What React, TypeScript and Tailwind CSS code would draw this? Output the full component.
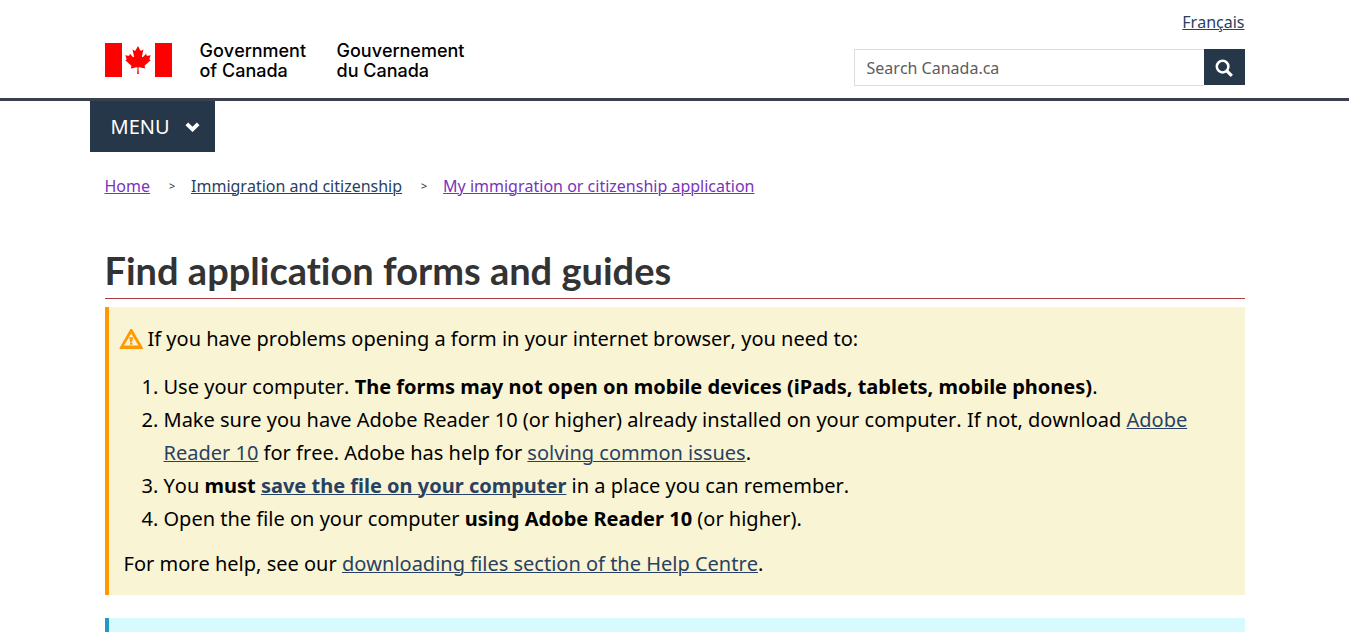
import React from "react";
import { FaCanadianMapleLeaf } from "react-icons/fa";

const linkClass = "text-[#284162] underline decoration-1";
const visitedClass = "text-[#7834bc] underline decoration-1";

function Flag() {
  return (
    <span className="flex h-[34px] w-[67px] shrink-0 items-center" aria-hidden="true">
      <span className="h-full w-[17px] bg-[#ff0000]" />
      <span className="flex flex-1 justify-center">
        <FaCanadianMapleLeaf className="h-7 w-7 text-[#ff0000]" />
      </span>
      <span className="h-full w-[17px] bg-[#ff0000]" />
    </span>
  );
}

function WarningIcon() {
  return (
    <svg viewBox="0 0 24 20" className="-ml-[5px] h-5 w-6 shrink-0" aria-hidden="true">
      <path
        fillRule="evenodd"
        fill="#ff9900"
        d="M11.4 0 H13 L24 19 V20 H.6 V19 Z M12.2 4.4 L5 16.6 H19.4 Z"
      />
      <path fill="#ff9900" d="M10.2 8.2 h4 l-1.2 5 h-1.6 Z M11 13.8 h2.4 v2 h-2.4 Z" />
    </svg>
  );
}

function Header() {
  return (
    <header>
      <div className="border-b-[3px] border-[#38414d]">
        <div className="mx-auto flex h-[98px] w-full max-w-[1170px] justify-between px-[15px]">
          <a
            href="#home"
            className="flex items-start pt-[43px] font-['Inter',sans-serif] text-[18px] leading-5 font-medium text-black"
          >
            <Flag />
            <span className="-mt-0.5 ml-7 w-[137px]">
              Government
              <br />
              of Canada
            </span>
            <span className="-mt-0.5">
              Gouvernement
              <br />
              du Canada
            </span>
          </a>
          <div className="flex flex-col items-end pt-2.5">
            <a href="#fr" lang="fr" className={`${linkClass} leading-6`}>
              Français
            </a>
            <form className="mt-[15px] flex items-start" onSubmit={(e) => e.preventDefault()}>
              <label htmlFor="search" className="sr-only">
                Search Canada.ca
              </label>
              <input
                id="search"
                type="search"
                placeholder="Search Canada.ca"
                className="h-[37px] w-[350px] border border-r-0 border-[#dddddd] bg-white px-3 text-base text-[#555555] placeholder:text-[#5c5c5c] focus:outline-2"
              />
              <button
                type="submit"
                aria-label="Search"
                className="flex h-9 w-[41px] items-center justify-center bg-[#26374a] text-white"
              >
                <svg viewBox="0 0 18 18" className="mt-0.5 h-[18px] w-[18px]" aria-hidden="true">
                  <circle cx="7.6" cy="7.6" r="5.8" fill="none" stroke="currentColor" strokeWidth="2.5" />
                  <path d="M11.6 11.6 L16.8 16.8" stroke="currentColor" strokeWidth="3.2" />
                </svg>
              </button>
            </form>
          </div>
        </div>
      </div>
      <div className="mx-auto w-full max-w-[1170px]">
        <button
          type="button"
          aria-haspopup="true"
          className="flex h-[51px] w-[125px] items-center justify-between bg-[#26374a] pr-[15px] pl-[21px] text-[20px] text-white"
        >
          MENU
          <svg viewBox="0 0 15 10" className="mt-px h-2.5 w-[15px]" aria-hidden="true">
            <path d="M1.8 1.8 L7.5 7.4 L13.2 1.8" fill="none" stroke="currentColor" strokeWidth="3.8" />
          </svg>
        </button>
      </div>
    </header>
  );
}

function Separator() {
  return (
    <span aria-hidden="true" className="w-[41px] pl-[3px] text-center text-[11px] text-[#333333]">
      &gt;
    </span>
  );
}

export default function App() {
  return (
    <div className="flex min-h-screen flex-col bg-white font-['Noto_Sans',sans-serif] text-base text-black [font-kerning:none]">
      <Header />
      <div className="mx-auto flex w-full max-w-[1170px] flex-1 flex-col px-[15px]">
        <nav aria-label="Breadcrumb" className="mt-[22px]">
          <ol className="flex flex-wrap leading-6">
            <li>
              <a href="#home" className={visitedClass}>
                Home
              </a>
            </li>
            <li className="flex items-center">
              <Separator />
              <a href="#immigration" className={linkClass}>
                Immigration and citizenship
              </a>
            </li>
            <li className="flex items-center">
              <Separator />
              <a href="#application" className={visitedClass}>
                My immigration or citizenship application
              </a>
            </li>
          </ol>
        </nav>
        <main className="flex flex-1 flex-col text-[20px] leading-[33px]">
          <h1 className="mt-[49px] border-b border-[#af3c43] pb-1 font-['Lato',sans-serif] text-[38px] leading-[47px] font-bold text-[#333333] [font-kerning:normal] [font-variant-ligatures:none]">
            Find application forms and guides
          </h1>
          <section className="mt-2 border-l-4 border-[#ff9900] bg-[#f9f4d4] p-[15px]">
            <p className="flex items-center gap-[5px]">
              <WarningIcon />
              If you have problems opening a form in your internet browser, you need to:
            </p>
            <ol className="mt-[15px] list-decimal pl-10">
              <li>
                Use your computer.{" "}
                <strong>The forms may not open on mobile devices (iPads, tablets, mobile phones)</strong>.
              </li>
              <li>
                Make sure you have Adobe Reader 10 (or higher) already installed on your computer. If not, download{" "}
                <a href="#reader" className={linkClass}>
                  Adobe Reader 10
                </a>{" "}
                for free. Adobe has help for{" "}
                <a href="#issues" className={linkClass}>
                  solving common issues
                </a>
                .
              </li>
              <li>
                You{" "}
                <strong>
                  must{" "}
                  <a href="#save" className={linkClass}>
                    save the file on your computer
                  </a>
                </strong>{" "}
                in a place you can remember.
              </li>
              <li>
                Open the file on your computer <strong>using Adobe Reader 10</strong> (or higher).
              </li>
            </ol>
            <p className="mt-3">
              For more help, see our{" "}
              <a href="#help" className={linkClass}>
                downloading files section of the Help Centre
              </a>
              .
            </p>
          </section>
          <section className="mt-[23px] flex-1 border-l-4 border-[#269abc] bg-[#d7faff]" />
        </main>
      </div>
    </div>
  );
}
